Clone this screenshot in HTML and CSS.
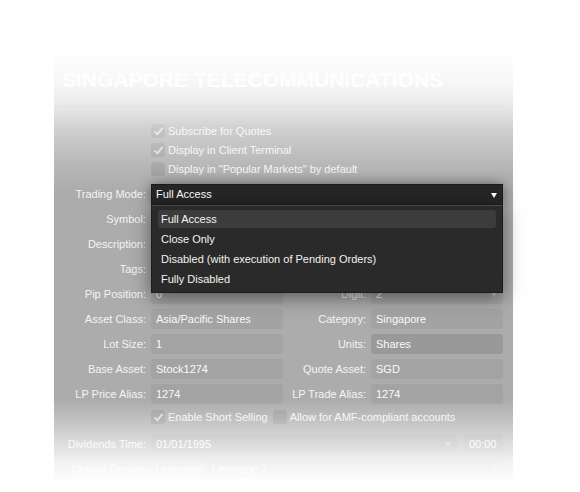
FILE: index.html
```html
<!DOCTYPE html>
<html>
<head>
<meta charset="utf-8">
<link rel="stylesheet" href="styles.css">
</head>
<body>
<div class="panel">
  <div class="fade"></div>
  <div class="header"><h1 class="title">SINGAPORE TELECOMMUNICATIONS</h1></div>
  <div class="form">
    <div class="checks">
      <label class="check"><span class="box on"></span>Subscribe for Quotes</label>
      <label class="check"><span class="box on"></span>Display in Client Terminal</label>
      <label class="check"><span class="box"></span>Display in "Popular Markets" by default</label>
    </div>
    <div class="grid">
      <div class="lbl">Trading Mode:</div>
      <div class="span3 ddwrap">
        <div class="select">Full Access<span class="arrow white"></span></div>
        <div class="menu">
          <div class="item active">Full Access</div>
          <div class="item">Close Only</div>
          <div class="item">Disabled (with execution of Pending Orders)</div>
          <div class="item">Fully Disabled</div>
        </div>
      </div>

      <div class="lbl">Symbol:</div>
      <div class="span3"><div class="field"></div></div>

      <div class="lbl">Description:</div>
      <div class="span3"><div class="field"></div></div>

      <div class="lbl">Tags:</div>
      <div class="span3"><div class="field"></div></div>

      <div class="lbl">Pip Position:</div>
      <div class="cell"><div class="field">0</div></div>
      <div class="lbl">Digit:</div>
      <div class="cell"><div class="field sel">2<span class="arrow"></span></div></div>

      <div class="lbl">Asset Class:</div>
      <div class="cell"><div class="field">Asia/Pacific Shares</div></div>
      <div class="lbl">Category:</div>
      <div class="cell"><div class="field">Singapore</div></div>

      <div class="lbl">Lot Size:</div>
      <div class="cell"><div class="field">1</div></div>
      <div class="lbl">Units:</div>
      <div class="cell"><div class="field dark">Shares</div></div>

      <div class="lbl">Base Asset:</div>
      <div class="cell"><div class="field">Stock1274</div></div>
      <div class="lbl">Quote Asset:</div>
      <div class="cell"><div class="field">SGD</div></div>

      <div class="lbl">LP Price Alias:</div>
      <div class="cell"><div class="field">1274</div></div>
      <div class="lbl">LP Trade Alias:</div>
      <div class="cell"><div class="field">1274</div></div>

      <div class="checkrow">
        <label class="check"><span class="box on"></span>Enable Short Selling</label>
        <label class="check"><span class="box"></span>Allow for AMF-compliant accounts</label>
      </div>

      <div class="lbl">Dividends Time:</div>
      <div class="span3 dividends">
        <div class="field sel grow">01/01/1995<span class="arrow"></span></div>
        <div class="field time">00:00</div>
      </div>
    </div>
    <div class="leverage">
      <span class="lev-lbl">Default Dynamic Leverage:</span>
      <div class="field sel grow">Leverage 7<span class="arrow"></span></div>
    </div>
  </div>
</div>
</body>
</html>
```
FILE: styles.css
```css
html, body {
  margin: 0;
  padding: 0;
  background: #ffffff;
}
body {
  font-family: "Liberation Sans", Arial, sans-serif;
  font-size: 11px;
  color: #f4f4f4;
}
.panel {
  position: relative;
  margin: 55px 0 0 54px;
  width: 459px;
  height: 432px;
  background: #acacac;
  box-sizing: border-box;
}
.fade {
  position: absolute;
  left: 0;
  top: 0;
  right: 0;
  bottom: 0;
  z-index: 5;
  pointer-events: none;
  background: linear-gradient(to bottom,
    rgba(255,255,255,0.98) 0px,
    rgba(255,255,255,0.9) 28px,
    rgba(255,255,255,0.72) 52px,
    rgba(255,255,255,0.42) 75px,
    rgba(255,255,255,0.12) 112px,
    rgba(255,255,255,0) 135px,
    rgba(255,255,255,0) 345px,
    rgba(255,255,255,0.22) 362px,
    rgba(255,255,255,0.55) 385px,
    rgba(255,255,255,0.85) 408px,
    rgba(255,255,255,1) 428px);
}
.header {
  height: 52px;
  margin: 0 9px 0 6px;
  border-bottom: 1px solid #8e8e8e;
  box-sizing: border-box;
  padding: 12px 0 0 2px;
}
.title {
  margin: 0;
  font-size: 21px;
  line-height: 25px;
  font-weight: bold;
  color: #f6f6f6;
}
.form {
  padding-top: 14px;
}
.checks {
  display: flex;
  flex-direction: column;
  padding-left: 97px;
}
.check {
  display: flex;
  align-items: center;
  gap: 3px;
  height: 19px;
  white-space: nowrap;
}
.box {
  width: 14px;
  height: 14px;
  border-radius: 3px;
  background: #9c9c9c;
  position: relative;
  flex: none;
}
.box.on::after {
  content: "";
  position: absolute;
  left: 5px;
  top: 2px;
  width: 3px;
  height: 7px;
  border: solid #d6d6d6;
  border-width: 0 2px 2px 0;
  transform: rotate(40deg);
}
.grid {
  display: grid;
  grid-template-columns: 97px 132px 88px 132px;
  grid-auto-rows: 25px;
  margin-top: 3px;
}
.lbl {
  padding-right: 5px;
  display: flex;
  align-items: center;
  justify-content: flex-end;
  white-space: nowrap;
}
.cell, .span3 {
  display: flex;
  align-items: center;
  min-width: 0;
}
.span3 {
  grid-column: span 3;
}
.field {
  height: 20px;
  line-height: 20px;
  width: 100%;
  box-sizing: border-box;
  padding: 0 5px;
  background: #a3a3a3;
  border-radius: 3px;
  color: #fafafa;
  position: relative;
  white-space: nowrap;
  overflow: hidden;
}
.field.dark {
  background: #999999;
}
.arrow {
  position: absolute;
  right: 6px;
  top: 8px;
  width: 0;
  height: 0;
  border-left: 3px solid transparent;
  border-right: 3px solid transparent;
  border-top: 5px solid #c4c4c4;
}
.arrow.white {
  border-top-color: #ffffff;
  right: 5px;
}
.ddwrap {
  position: relative;
  z-index: 10;
  align-items: flex-start;
  padding-top: 3px;
}
.select {
  position: relative;
  width: 100%;
  height: 21px;
  line-height: 19px;
  box-sizing: border-box;
  padding: 0 4px;
  background: #262626;
  border: 1px solid #1c1c1c;
  color: #ffffff;
  box-shadow: 0 0 14px rgba(0,0,0,0.45);
}
.menu {
  position: absolute;
  left: 0;
  right: 0;
  top: 24px;
  height: 88px;
  box-sizing: border-box;
  padding: 4px 6px;
  display: flex;
  flex-direction: column;
  gap: 2px;
  background: #2a2a2a;
  border: 1px solid #1c1c1c;
  border-top-color: #4a4a4a;
  box-shadow: 0 4px 18px rgba(0,0,0,0.5);
}
.item {
  height: 18px;
  line-height: 18px;
  flex: none;
  padding-left: 3px;
  border-radius: 3px;
  color: #f2f2f2;
  white-space: nowrap;
}
.item.active {
  background: #3c3c3c;
}
.checkrow {
  grid-column: 2 / span 3;
  display: flex;
  align-items: center;
  gap: 5px;
  height: 22px;
}
.dividends {
  gap: 7px;
}
.grow {
  flex: 1;
}
.time {
  width: 39px;
  flex: none;
  padding: 0 0 0 5px;
}
.leverage {
  display: flex;
  align-items: center;
  height: 25px;
  padding-left: 18px;
  gap: 10px;
  margin-right: 10px;
}
.lev-lbl {
  white-space: nowrap;
  width: 125px;
}
```
